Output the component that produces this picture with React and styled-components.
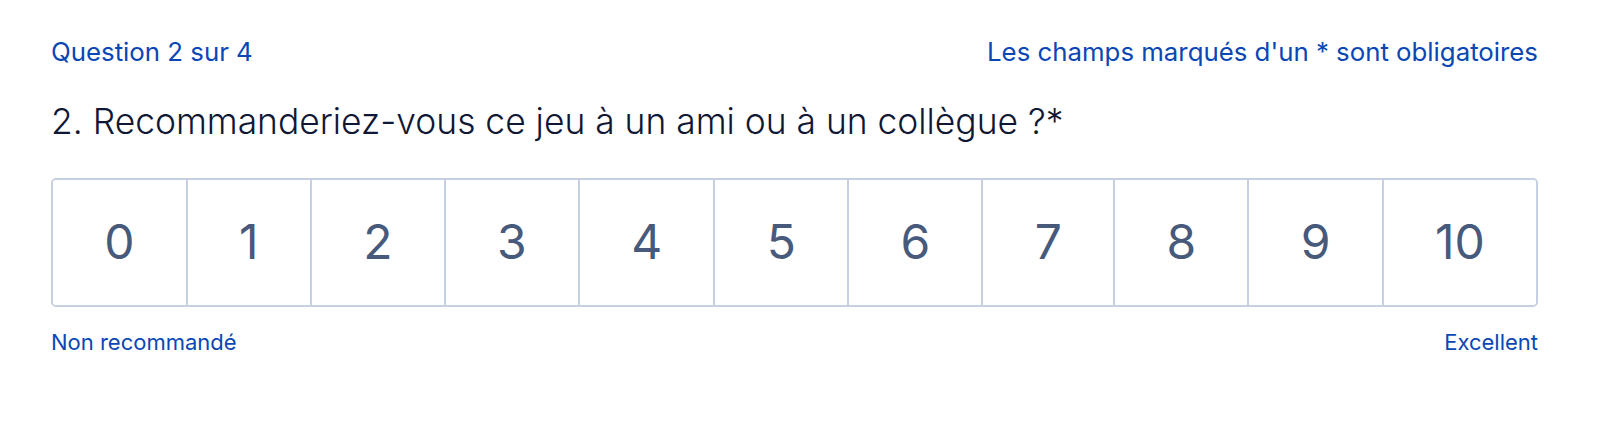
import styled, { createGlobalStyle } from 'styled-components';

const GlobalStyle = createGlobalStyle`
  body {
    margin: 0;
    background: #ffffff;
    font-family: Inter, "Noto Sans", sans-serif;
  }
`;

export default function App() {
  const values = [0, 1, 2, 3, 4, 5, 6, 7, 8, 9, 10];
  return (
    <Page>
      <GlobalStyle />
      <TopRow>
        <Meta>Question 2 sur 4</Meta>
        <Meta>Les champs marqués d'un * sont obligatoires</Meta>
      </TopRow>
      <Title>2. Recommanderiez-vous ce jeu à un ami ou à un collègue ?*</Title>
      <Scale>
        {values.map((v) => (
          <Cell key={v}>{v}</Cell>
        ))}
      </Scale>
      <Legend>
        <span>Non recommandé</span>
        <span>Excellent</span>
      </Legend>
    </Page>
  );
}

const Page = styled.div`
  padding: 36px 62px 0 51px;
`;

const TopRow = styled.div`
  display: flex;
  justify-content: space-between;
  align-items: baseline;
  height: 31px;
`;

const Meta = styled.span`
  font-size: 25.8px;
  line-height: 31px;
  color: #0a47b4;
`;

const Title = styled.h2`
  margin: 34px 0 0;
  font-size: 35.4px;
  font-weight: 300;
  line-height: 42px;
  color: #101735;
`;

const Scale = styled.div`
  display: flex;
  margin-top: 35px;
  height: 129px;
  border: 2px solid #c6d0e2;
  border-radius: 5px;
  box-sizing: border-box;
  overflow: hidden;
`;

const Cell = styled.button`
  flex: 1 1 auto;
  display: flex;
  align-items: center;
  justify-content: center;
  padding: 0 0 3px;
  border: 0;
  border-left: 2px solid #c6d0e2;
  background: #ffffff;
  font-family: Inter, "Noto Sans", sans-serif;
  font-size: 48px;
  color: #475a7b;
  &:first-child {
    border-left: 0;
  }
`;

const Legend = styled.div`
  display: flex;
  justify-content: space-between;
  margin-top: 22px;
  font-size: 22px;
  line-height: 26px;
  color: #0a47b4;
`;
